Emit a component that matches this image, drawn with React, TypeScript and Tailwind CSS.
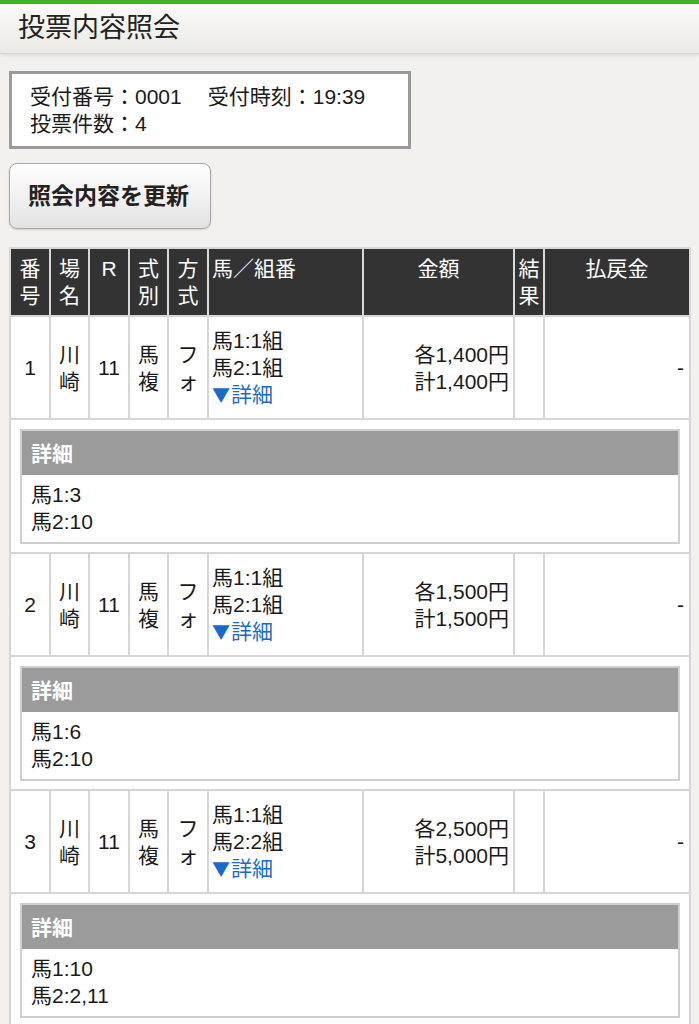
import React from 'react';

type Bet = {
  no: number;
  place: string[];
  race: string;
  kind: string[];
  method: string[];
  combos: string[];
  each: string;
  total: string;
  details: string[];
};

const bets: Bet[] = [
  {
    no: 1,
    place: ['川', '崎'],
    race: '11',
    kind: ['馬', '複'],
    method: ['フ', 'ォ'],
    combos: ['馬1:1組', '馬2:1組'],
    each: '各1,400円',
    total: '計1,400円',
    details: ['馬1:3', '馬2:10'],
  },
  {
    no: 2,
    place: ['川', '崎'],
    race: '11',
    kind: ['馬', '複'],
    method: ['フ', 'ォ'],
    combos: ['馬1:1組', '馬2:1組'],
    each: '各1,500円',
    total: '計1,500円',
    details: ['馬1:6', '馬2:10'],
  },
  {
    no: 3,
    place: ['川', '崎'],
    race: '11',
    kind: ['馬', '複'],
    method: ['フ', 'ォ'],
    combos: ['馬1:1組', '馬2:2組'],
    each: '各2,500円',
    total: '計5,000円',
    details: ['馬1:10', '馬2:2,11'],
  },
];

const font = {
  fontFamily: '"Liberation Sans", "Noto Sans CJK JP", sans-serif',
};

function Stack({ chars }: { chars: string[] }) {
  return (
    <div className="flex flex-col items-center">
      {chars.map((c, i) => (
        <span key={i}>{c}</span>
      ))}
    </div>
  );
}

const th =
  'bg-[#333333] text-white font-normal align-top pt-[6px] border-x-2 border-[#d9d9d9]';
const td = 'border-2 border-[#d6d6d6] align-middle';

function BetRows({ bet }: { bet: Bet }) {
  return (
    <>
      <tr className="h-[103px]">
        <td className={`${td} text-center`}>{bet.no}</td>
        <td className={td}>
          <Stack chars={bet.place} />
        </td>
        <td className={`${td} text-center`}>{bet.race}</td>
        <td className={td}>
          <Stack chars={bet.kind} />
        </td>
        <td className={td}>
          <Stack chars={bet.method} />
        </td>
        <td className={`${td} pl-[3px]`}>
          {bet.combos.map((c) => (
            <div key={c}>{c}</div>
          ))}
          <div className="text-[#1a6bc9]">
            <span className="font-['Noto_Sans_CJK_JP'] text-[18px] mr-[1px]">▼</span>詳細
          </div>
        </td>
        <td className={`${td} text-right pr-[4px]`}>
          <div>{bet.each}</div>
          <div>{bet.total}</div>
        </td>
        <td className={td}></td>
        <td className={`${td} text-right pr-[5px]`}>-</td>
      </tr>
      <tr>
        <td colSpan={9} className="border-2 border-[#d6d6d6] px-[9px] pt-[9px] pb-[8px]">
          <div className="border-2 border-[#cfcfcf]">
            <div className="bg-[#9b9b9b] text-white font-bold h-[44px] flex items-center px-[9px]">
              詳細
            </div>
            <div className="bg-white px-[9px] pt-[6px] pb-[7px]">
              {bet.details.map((d) => (
                <div key={d}>{d}</div>
              ))}
            </div>
          </div>
        </td>
      </tr>
    </>
  );
}

export default function App() {
  return (
    <div
      className="min-h-[1024px] w-[699px] bg-[#f2f1ee] text-[#1a1a1a] overflow-hidden"
      style={font}
    >
      <div className="h-[4px] bg-[#3cb521]" />
      <header className="h-[50px] flex items-center pl-[18px] text-[27px] text-[#222] bg-gradient-to-b from-[#fbfaf8] to-[#ebe9e5] border-b border-[#d9d7d2] shadow-[0_2px_3px_rgba(0,0,0,0.08)]">
        投票内容照会
      </header>

      <div className="px-[9px] pt-[17px]">
        <div className="w-[402px] bg-white border-[3px] border-[#9a9a9a] pl-[18px] py-[9px] text-[21px] leading-[27px]">
          <div>
            受付番号：0001<span className="inline-block w-[26px]" />受付時刻：19:39
          </div>
          <div>投票件数：4</div>
        </div>

        <button className="mt-[14px] w-[202px] h-[66px] rounded-[8px] border border-[#a8a8a8] bg-gradient-to-b from-[#fdfdfd] via-[#f2f2f2] to-[#e2e2e2] text-[23px] font-bold text-[#222] pl-[18px] text-left shadow-[0_1px_2px_rgba(0,0,0,0.15)]">
          照会内容を更新
        </button>

        <table className="mt-[18px] w-[680px] table-fixed border-collapse bg-white text-[21px] leading-[27px] border-2 border-[#d6d6d6]">
          <colgroup>
            <col className="w-[40px]" />
            <col className="w-[39px]" />
            <col className="w-[40px]" />
            <col className="w-[39px]" />
            <col className="w-[40px]" />
            <col className="w-[155px]" />
            <col className="w-[151px]" />
            <col className="w-[30px]" />
            <col className="w-[146px]" />
          </colgroup>
          <thead>
            <tr className="h-[68px]">
              <th className={th}>
                <Stack chars={['番', '号']} />
              </th>
              <th className={th}>
                <Stack chars={['場', '名']} />
              </th>
              <th className={th}>R</th>
              <th className={th}>
                <Stack chars={['式', '別']} />
              </th>
              <th className={th}>
                <Stack chars={['方', '式']} />
              </th>
              <th className={`${th} text-left pl-[3px]`}>馬／組番</th>
              <th className={th}>金額</th>
              <th className={th}>
                <Stack chars={['結', '果']} />
              </th>
              <th className={th}>払戻金</th>
            </tr>
          </thead>
          <tbody>
            {bets.map((b) => (
              <BetRows key={b.no} bet={b} />
            ))}
          </tbody>
        </table>
      </div>
    </div>
  );
}
